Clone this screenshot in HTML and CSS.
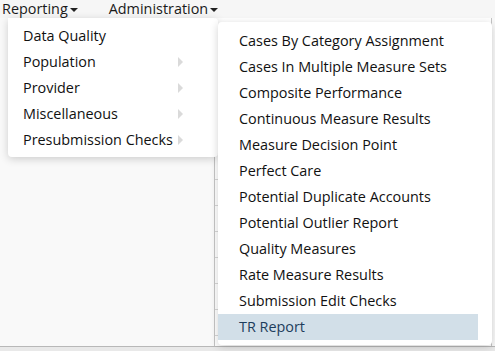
FILE: index.html
```html
<!DOCTYPE html>
<html lang="en">
<head>
    <meta charset="UTF-8">
    <meta name="viewport" content="width=device-width, initial-scale=1.0">
    <title>Reporting</title>
    <link rel="stylesheet" href="styles.css">
</head>
<body>
    <div class="navbar">
        <div class="nav-item">Reporting<span class="caret"></span></div>
        <div class="nav-item">Administration<span class="caret"></span></div>
    </div>

    <div class="page">
        <div class="grid">
            <div class="row"></div>
            <div class="row"></div>
            <div class="row"></div>
            <div class="row"></div>
            <div class="row"></div>
            <div class="row"></div>
            <div class="row"></div>
            <div class="row"></div>
            <div class="row"></div>
            <div class="row"></div>
            <div class="row"></div>
            <div class="row"></div>
        </div>
    </div>

    <ul class="menu menu-main">
        <li>Data Quality</li>
        <li class="sub">Population</li>
        <li class="sub">Provider</li>
        <li class="sub">Miscellaneous</li>
        <li class="sub">Presubmission Checks</li>
    </ul>

    <ul class="menu menu-sub">
        <li>Cases By Category Assignment</li>
        <li>Cases In Multiple Measure Sets</li>
        <li>Composite Performance</li>
        <li>Continuous Measure Results</li>
        <li>Measure Decision Point</li>
        <li>Perfect Care</li>
        <li>Potential Duplicate Accounts</li>
        <li>Potential Outlier Report</li>
        <li>Quality Measures</li>
        <li>Rate Measure Results</li>
        <li>Submission Edit Checks</li>
        <li class="active">TR Report</li>
    </ul>
</body>
</html>
```

FILE: styles.css
```css
body {
    font-family: "Open Sans", sans-serif;
    font-size: 14.4px;
    margin: 0;
    width: 495px;
    height: 351px;
    overflow: hidden;
    background-color: #e9e9e9;
    color: #111;
}
.navbar {
    display: flex;
    height: 18px;
    line-height: 16px;
    padding-left: 2px;
    gap: 31px;
    background-color: #f6f6f6;
}
.nav-item {
    display: flex;
    align-items: center;
    color: #1a1a1a;
}
.caret {
    display: inline-block;
    margin-left: 2px;
    margin-top: 2px;
    border-left: 4px solid transparent;
    border-right: 4px solid transparent;
    border-top: 4px solid #222;
}
.page {
    height: 328px;
    background-color: #f9f9f9;
    border-bottom: 1px solid #b8b8b8;
    position: relative;
}
.grid {
    margin-left: 214px;
    margin-right: 3px;
    padding-top: 6px;
    border-right: 1px solid #c4c4c4;
    border-left: 1px solid #c4c4c4;
    height: 322px;
    background: #fff;
}
.row {
    height: 25px;
    border-bottom: 1px solid #d8d8d8;
}
.menu {
    list-style: none;
    margin: 0;
    background: #fff;
    border-radius: 4px;
    box-shadow: 0 2px 8px rgba(0, 0, 0, 0.18);
    position: absolute;
}
.menu li {
    height: 26px;
    line-height: 26px;
    white-space: nowrap;
}
.menu-main {
    left: 8px;
    top: 18px;
    width: 195px;
    padding: 5px 0 4px 15px;
    border-top-left-radius: 0;
}
.menu-main .sub {
    position: relative;
}
.menu-main .sub::after {
    content: "";
    position: absolute;
    right: 35px;
    top: 8px;
    border-top: 5px solid transparent;
    border-bottom: 5px solid transparent;
    border-left: 5px solid #dadada;
}
.menu-sub {
    left: 218px;
    top: 22px;
    width: 274px;
    padding: 6px 0 5px 0;
}
.menu-sub li {
    padding-left: 21px;
    margin-right: 14px;
}
.menu-sub li.active {
    background-color: #d2dfe8;
    color: #1d3d5c;
}
```
